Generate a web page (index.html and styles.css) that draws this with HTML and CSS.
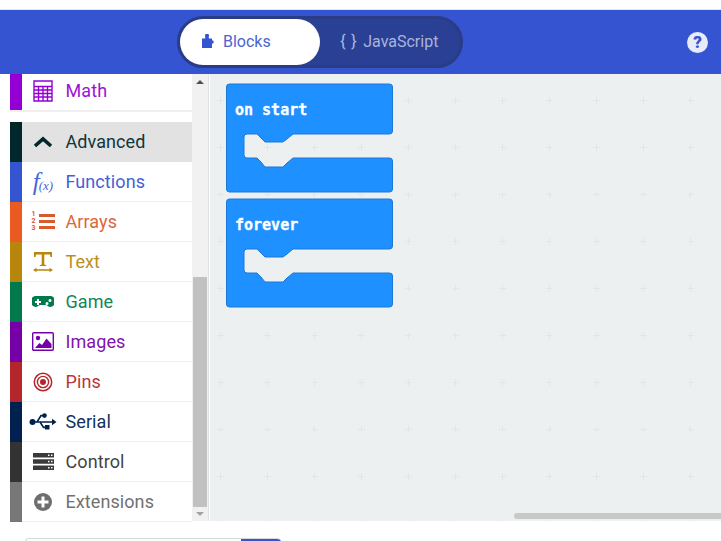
FILE: index.html
```html
<!DOCTYPE html>
<html lang="en">
<head>
<meta charset="utf-8">
<title>MakeCode editor</title>
<link rel="stylesheet" href="styles.css">
</head>
<body>
<div class="topstrip"></div>
<header class="menubar">
  <div class="toggle">
    <div class="tab tab-active">
      <svg class="tab-icon" width="13" height="14" viewBox="0 0 13 14"><path fill="#3454d1" d="M0 14V4.500h3.200V2.400a2 2 0 1 1 3.600 0v2.100H10v1.700a1.800 1.800 0 1 1 0 3.600V14z"/></svg>
      <span>Blocks</span>
    </div>
    <div class="tab tab-js">
      <span class="braces">{ }</span>
      <span>JavaScript</span>
    </div>
  </div>
  <div class="help">?</div>
</header>
<main class="main">
  <nav class="toolbox">
    <div class="row row-math">
      <span class="swatch c-math-bg"></span>
      <span class="icon"><svg width="20" height="22" viewBox="0 0 20 22"><path fill="none" stroke="#9400d3" stroke-width="1.400" d="M1 1h18v20H1zM1 6.500h18M1 10h18M1 13.500h18M1 17h18M5.500 6.500V21M10 6.500V21M14.500 6.500V21"/></svg></span>
      <span class="label c-math">Math</span>
    </div>
    <div class="gap"></div>
    <div class="row row-selected">
      <span class="swatch c-adv-bg"></span>
      <span class="icon"><svg width="20" height="12" viewBox="0 0 20 12"><path fill="none" stroke="#00272b" stroke-width="3.600" d="M2 10l8-7 8 7"/></svg></span>
      <span class="label c-adv">Advanced</span>
    </div>
    <div class="row">
      <span class="swatch c-fn-bg"></span>
      <span class="icon icon-fx c-fn"><i>f</i><small>(x)</small></span>
      <span class="label c-fn">Functions</span>
    </div>
    <div class="row">
      <span class="swatch c-arr-bg"></span>
      <span class="icon icon-arr c-arr">
        <span class="nums"><b>1</b><b>2</b><b>3</b></span>
        <svg width="16" height="15" viewBox="0 0 16 15"><path fill="#d95a2b" d="M0 0h16v3H0zM0 6h16v3H0zM0 12h16v3H0z"/></svg>
      </span>
      <span class="label c-arr">Arrays</span>
    </div>
    <div class="row">
      <span class="swatch c-txt-bg"></span>
      <span class="icon"><svg width="20" height="20" viewBox="0 0 20 20"><path fill="#b8860b" d="M1 0h18v5h-1.500l-.5-2.500H11.300V12.500l2 .7V14H6.700v-.8l2-.7V2.500H3L2.500 5H1zM3.500 15.800v1.400h13v-1.400L20 18l-3.500 2.200v-1.400h-13v1.400L0 18z"/></svg></span>
      <span class="label c-txt">Text</span>
    </div>
    <div class="row">
      <span class="swatch c-game-bg"></span>
      <span class="icon"><svg width="22" height="12" viewBox="0 0 22 12"><path fill="#007a4b" fill-rule="evenodd" d="M5.500 0h11a5.500 5.500 0 0 1 2.500 10.800c-2 .8-3-1.300-5-1.800H8c-2 .5-3 2.600-5 1.800A5.500 5.500 0 0 1 5.500 0zM3 5v2h2v2h2V7h2V5H7V3H5v2zM15 6a1.500 1.500 0 1 0 0 3 1.500 1.500 0 0 0 0-3zM18 3a1.500 1.500 0 1 0 0 3 1.500 1.500 0 0 0 0-3z"/></svg></span>
      <span class="label c-game">Game</span>
    </div>
    <div class="row">
      <span class="swatch c-img-bg"></span>
      <span class="icon"><svg width="22" height="19" viewBox="0 0 22 19"><rect x=".7" y=".7" width="20.600" height="17.600" rx="1" fill="none" stroke="#7600a8" stroke-width="1.400"/><circle cx="6" cy="6" r="2.200" fill="#7600a8"/><path fill="#7600a8" d="M3 16l4.500-5 2.500 2 4.500-6.500L19.500 12v4z"/></svg></span>
      <span class="label c-img">Images</span>
    </div>
    <div class="row">
      <span class="swatch c-pin-bg"></span>
      <span class="icon"><svg width="20" height="20" viewBox="0 0 20 20"><g fill="none" stroke="#b4262a"><circle cx="10" cy="10" r="8.700" stroke-width="1.500"/><circle cx="10" cy="10" r="5.600" stroke-width="1.400"/></g><circle cx="10" cy="10" r="3" fill="#b4262a"/></svg></span>
      <span class="label c-pin">Pins</span>
    </div>
    <div class="row">
      <span class="swatch c-ser-bg"></span>
      <span class="icon"><svg width="28" height="18" viewBox="0 0 28 18"><g fill="#002050"><circle cx="3.500" cy="9" r="3"/><path d="M5 8.200h19v1.600H5zM23 5.800L27.500 9 23 12.200z"/><circle cx="15.500" cy="2.600" r="2.300"/><rect x="16" y="12" width="4.500" height="4.500"/></g><path fill="none" stroke="#002050" stroke-width="1.600" d="M8 9l4-6.400h3M11 9l3.500 5.400h3"/></svg></span>
      <span class="label c-ser">Serial</span>
    </div>
    <div class="row">
      <span class="swatch c-ctl-bg"></span>
      <span class="icon"><svg width="21" height="17" viewBox="0 0 21 17"><path fill="#3a3a3a" fill-rule="evenodd" d="M0 0h21v4.500H0zM0 6.200h21v4.500H0zM0 12.400h21v4.500H0zM15 1.500v1.500h1.500V1.500zM18 1.500v1.500h1.500V1.500zM15 7.700v1.500h1.500V7.700zM18 7.700v1.500h1.500V7.700zM15 13.900v1.500h1.500v-1.500zM18 13.900v1.500h1.500v-1.500z"/></svg></span>
      <span class="label c-ctl">Control</span>
    </div>
    <div class="row">
      <span class="swatch c-ext-bg"></span>
      <span class="icon"><svg width="20" height="20" viewBox="0 0 20 20"><circle cx="10" cy="10" r="9" fill="#6f6f6f"/><path fill="#fff" d="M8.500 4.500h3v4h4v3h-4v4h-3v-4h-4v-3h4z"/></svg></span>
      <span class="label c-ext">Extensions</span>
    </div>
  </nav>
  <div class="scrollbar">
    <span class="arrow arrow-up"></span>
    <span class="thumb"></span>
    <span class="arrow arrow-down"></span>
  </div>
  <section class="workspace">
    <svg class="canvas" width="511" height="447" viewBox="0 0 511 447">
      <defs>
        <pattern id="grid" x="7" y="-24" width="47" height="47" patternUnits="userSpaceOnUse">
          <path d="M0 3.500h7M3.500 0v7" stroke="#e2e6e7" stroke-width="1" fill="none"/>
        </pattern>
      </defs>
      <rect width="511" height="447" fill="url(#grid)"/>
      <path class="block" d="M19.500 10h160a3 3 0 0 1 3 3v44a3 3 0 0 1-3 3H83l-6 5-4 3H55l-4-4-4-4H37a3 3 0 0 0-3 3v18a3 3 0 0 0 3 3h10l4 4 4 5h18l4-4 6-5h96.500a3 3 0 0 1 3 3v28a3 3 0 0 1-3 3h-160a3 3 0 0 1-3-3V13a3 3 0 0 1 3-3z"/>
      <path class="block" d="M19.500 125h160a3 3 0 0 1 3 3v44a3 3 0 0 1-3 3H83l-6 5-4 3H55l-4-4-4-4H37a3 3 0 0 0-3 3v18a3 3 0 0 0 3 3h10l4 4 4 5h18l4-4 6-5h96.500a3 3 0 0 1 3 3v28a3 3 0 0 1-3 3h-160a3 3 0 0 1-3-3V128a3 3 0 0 1 3-3z"/>
      <text class="block-text" x="25" y="41">on start</text>
      <text class="block-text" x="25" y="156">forever</text>
    </svg>
    <span class="hscroll"></span>
  </section>
</main>
<footer class="footer">
  <div class="namebox"><span class="savebtn"></span></div>
</footer>
</body>
</html>
```
FILE: styles.css
```css
* { box-sizing: border-box; }
html, body { margin: 0; padding: 0; }
body {
  width: 721px;
  height: 541px;
  overflow: hidden;
  background: #fff;
  font-family: Roboto, "Liberation Sans", sans-serif;
}
.topstrip { height: 10px; background: #fff; border-bottom: 1px solid #e4e4e4; }
.menubar {
  height: 64px;
  background: #3454d1;
  display: flex;
  align-items: center;
  padding-left: 177px;
  padding-right: 13px;
  justify-content: space-between;
}
.toggle {
  width: 286px;
  height: 52px;
  border-radius: 26px;
  background: #2a4095;
  border: 3px solid #2a3c86;
  display: flex;
  align-items: center;
}
.tab {
  height: 46px;
  border-radius: 23px;
  display: flex;
  align-items: center;
  font-size: 16px;
  padding-bottom: 2px;
}
.tab-active {
  width: 140px;
  background: #fff;
  color: #4a64d0;
  padding-left: 22px;
  gap: 8px;
}
.tab-js { color: #a9b4dc; padding-left: 20px; gap: 6px; }
.braces { font-size: 17px; letter-spacing: .5px; }
.help {
  width: 21px;
  height: 21px;
  border-radius: 50%;
  background: #e8ecf8;
  color: #3454d1;
  font-weight: 900;
  font-size: 17px;
  line-height: 21px;
  text-align: center;
}
.main { display: flex; height: 447px; }
.toolbox { margin-left: 10px; width: 182px; background: #fff; display: flex; flex-direction: column; }
.row {
  height: 40px;
  flex: none;
  display: flex;
  align-items: center;
  border-bottom: 1px solid #efefef;
}
.row-math { height: 37px; padding-bottom: 3px; }
.row-math .swatch { margin-bottom: -3px; }
.gap { height: 11px; flex: none; background: #fff; border-top: 1px solid #efefef; }
.row-selected { background: #e2e2e2; border-bottom: 0; padding-bottom: 1px; }
.row-selected .swatch { margin-bottom: -1px; }
.swatch { width: 12px; align-self: stretch; flex: none; margin-bottom: -1px; }
.icon { width: 42px; flex: none; display: flex; align-items: center; justify-content: center; }
.label { font-size: 18px; padding-left: 2px; letter-spacing: .08px; opacity: .92; margin-left: -.5px; }
.icon-fx { font-family: "Liberation Serif", serif; font-size: 25px; line-height: 1; opacity: .9; }
.icon-fx small { font-size: 13px; padding-top: 8px; margin-left: -1px; font-style: italic; }
.icon-arr { gap: 1px; }
.nums { display: flex; flex-direction: column; width: 6px; font-size: 7px; line-height: 7px; }
.nums b { font-weight: 700; }
.c-math { color: #9400d3; } .c-math-bg { background: #9400d3; }
.c-adv { color: #00272b; } .c-adv-bg { background: #00272b; }
.c-fn { color: #3454d1; } .c-fn-bg { background: #3454d1; }
.c-arr { color: #d95a2b; } .c-arr-bg { background: #ea5b21; }
.c-txt { color: #b8860b; } .c-txt-bg { background: #b8860b; }
.c-game { color: #007a4b; } .c-game-bg { background: #007a4b; }
.c-img { color: #7600a8; } .c-img-bg { background: #7600a8; }
.c-pin { color: #b4262a; } .c-pin-bg { background: #b4262a; }
.c-ser { color: #002050; } .c-ser-bg { background: #002050; }
.c-ctl { color: #333; } .c-ctl-bg { background: #333; }
.c-ext { color: #666; } .c-ext-bg { background: #777; }
.scrollbar {
  width: 17px;
  background: #f1f1f1;
  border-right: 1px solid #e0e0e0;
  flex: none;
  display: flex;
  flex-direction: column;
  align-items: center;
}
.arrow { width: 0; height: 0; border-left: 4px solid transparent; border-right: 4px solid transparent; flex: none; }
.arrow-up { border-bottom: 4px solid #505050; margin-top: 6px; }
.arrow-down { border-top: 4px solid #a3a3a3; margin-bottom: 5px; }
.thumb { width: 14px; background: #c1c1c1; margin-top: 193px; flex: 1; margin-bottom: 5px; }
.workspace { flex: 1; background: #ecf0f1; position: relative; overflow: hidden; margin-left: 1px; }
.canvas { display: block; }
.block { fill: #1e90ff; stroke: #1a78d6; }
.block-text { font-family: "DejaVu Sans Mono", monospace; font-weight: 700; font-size: 15px; fill: #fff; stroke: #fff; stroke-width: .3px; }
.hscroll { position: absolute; left: 304px; right: 0; bottom: 2px; height: 6px; background: #c8c8c8; border-radius: 3px 0 0 3px; }
.footer { height: 20px; position: relative; }
.namebox { position: absolute; left: 25px; top: 17px; width: 256px; height: 20px; border-top: 1px solid #d8d8d8; border-left: 1px solid #d8d8d8; border-radius: 4px 4px 0 0; overflow: hidden; }
.savebtn { position: absolute; right: 0; top: -1px; width: 40px; height: 20px; background: #3454d1; }
```
